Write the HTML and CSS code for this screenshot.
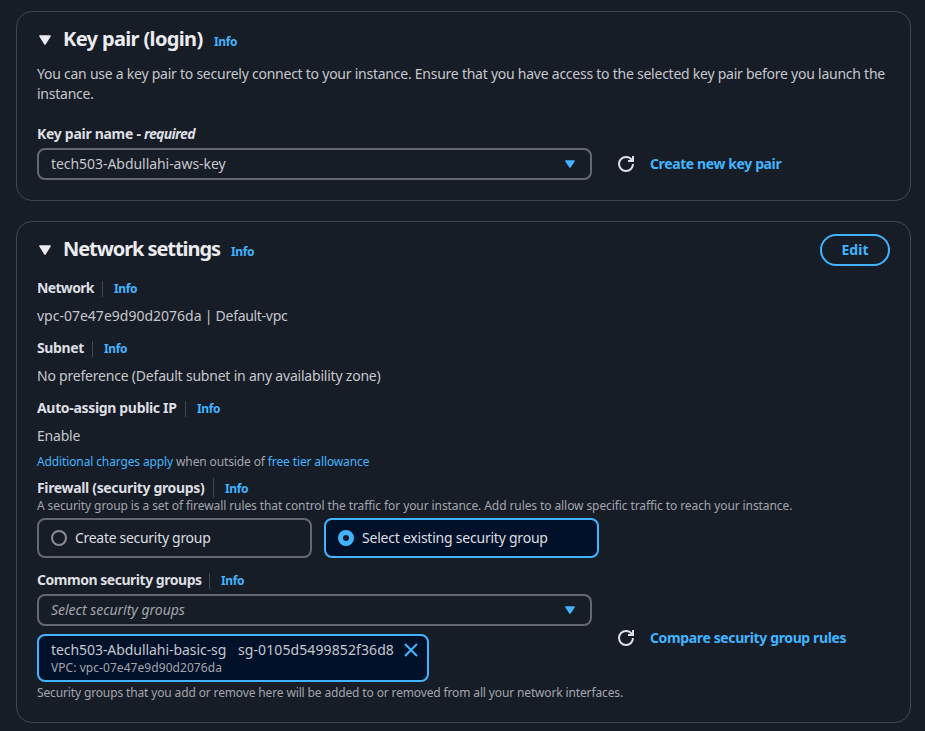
FILE: index.html
```
<!DOCTYPE html>
<html lang="en">
<head>
<meta charset="utf-8">
<title>Launch an instance</title>
<link rel="stylesheet" href="styles.css">
</head>
<body>
<main class="page">
  <section class="card">
    <header class="card-header">
      <svg class="caret" width="16" height="16" viewBox="0 0 16 16"><path d="M3 4h10l-5 8z" fill="#ebebf0" stroke="#ebebf0" stroke-width="1.6" stroke-linejoin="round"/></svg>
      <h2 class="title title-key">Key pair (login)</h2>
      <a class="info">Info</a>
    </header>
    <p class="body-text intro">You can use a key pair to securely connect to your instance. Ensure that you have access to the selected key pair before you launch the instance.</p>
    <div class="label label-key"><span class="key-name">Key pair name - </span><i>required</i></div>
    <div class="field-row">
      <div class="select"><span class="id-text">tech503-Abdullahi-aws-key</span>
        <svg class="arrow" width="16" height="16" viewBox="0 0 16 16"><path d="M4 5h8l-4 6z" fill="#42b4ff" stroke="#42b4ff" stroke-width="1.6" stroke-linejoin="round"/></svg>
      </div>
      <svg class="refresh" width="16" height="16" viewBox="0 0 16 16"><path d="M10 5h5V0M15 8a6.96 6.96 0 0 1-7 7 6.96 6.96 0 0 1-7-7 6.96 6.96 0 0 1 7-7c2.8 0 5.2 1.6 6.300 4" fill="none" stroke="#dedee3" stroke-width="2"/></svg>
      <a class="action action-create">Create new key pair</a>
    </div>
  </section>

  <section class="card">
    <header class="card-header">
      <svg class="caret" width="16" height="16" viewBox="0 0 16 16"><path d="M3 4h10l-5 8z" fill="#ebebf0" stroke="#ebebf0" stroke-width="1.6" stroke-linejoin="round"/></svg>
      <h2 class="title title-network">Network settings</h2>
      <a class="info">Info</a>
      <button class="edit">Edit</button>
    </header>
    <div class="group">
      <div class="label"><span class="l-network">Network</span><a class="info divided">Info</a></div>
      <div class="body-text value v-vpc"><span class="vpc-id">vpc-07e47e9d90d2076da</span> | Default-vpc</div>
    </div>
    <div class="group">
      <div class="label"><span class="l-subnet">Subnet</span><a class="info divided">Info</a></div>
      <div class="body-text value v-pref">No preference (Default subnet in any availability zone)</div>
    </div>
    <div class="group">
      <div class="label"><span class="l-ip">Auto-assign public IP</span><a class="info divided">Info</a></div>
      <div class="body-text value v-enable">Enable</div>
    </div>
    <div class="small charges"><a>Additional charges apply</a> when outside of <a>free tier allowance</a></div>
    <div class="label"><span class="l-firewall">Firewall (security groups)</span><a class="info divided tall">Info</a></div>
    <div class="small firewall-note">A security group is a set of firewall rules that control the traffic for your instance. Add rules to allow specific traffic to reach your instance.</div>
    <div class="tiles">
      <div class="tile"><span class="radio"></span><span class="t-create">Create security group</span></div>
      <div class="tile selected"><span class="radio"></span><span class="t-select">Select existing security group</span></div>
    </div>
    <div class="label label-common"><span class="l-common">Common security groups</span><a class="info divided">Info</a></div>
    <div class="field-row">
      <div class="stack">
        <div class="select"><i class="placeholder">Select security groups</i>
          <svg class="arrow" width="16" height="16" viewBox="0 0 16 16"><path d="M4 5h8l-4 6z" fill="#42b4ff" stroke="#42b4ff" stroke-width="1.6" stroke-linejoin="round"/></svg>
        </div>
        <div class="token">
          <div class="token-main"><span class="sg-name">tech503-Abdullahi-basic-sg</span><span class="sg-id">sg-0105d5499852f36d8</span>
            <svg class="close" width="16" height="16" viewBox="0 0 16 16"><path d="m2 2 12 12M14 2 2 14" fill="none" stroke="#42b4ff" stroke-width="2"/></svg>
          </div>
          <div class="small token-vpc">VPC: vpc-07e47e9d90d2076da</div>
        </div>
      </div>
      <svg class="refresh" width="16" height="16" viewBox="0 0 16 16"><path d="M10 5h5V0M15 8a6.96 6.96 0 0 1-7 7 6.96 6.96 0 0 1-7-7 6.96 6.96 0 0 1 7-7c2.8 0 5.2 1.6 6.300 4" fill="none" stroke="#dedee3" stroke-width="2"/></svg>
      <a class="action action-compare">Compare security group rules</a>
    </div>
    <div class="small help">Security groups that you add or remove here will be added to or removed from all your network interfaces.</div>
  </section>
</main>
</body>
</html>
```
FILE: styles.css
```
* { box-sizing: border-box; }
body {
  margin: 0;
  background: #161d26;
  color: #c6c6cd;
  font: 14px/20px "Noto Sans", sans-serif;
}
.page { display: flex; flex-direction: column; gap: 20px; padding: 11px 14px 8px 16px; }
.card { border: 1px solid #424650; border-radius: 16px; padding: 0 20px; white-space: nowrap; }
.card:first-child { height: 190px; }
.card:last-child { height: 502px; }
.card-header { display: flex; align-items: baseline; height: 52px; padding-top: 15px; position: relative; }
.caret { width: 16px; height: 16px; margin-right: 10px; align-self: flex-start; margin-top: 5px; }
.title { margin: 0; font-size: 20px; line-height: 24px; font-weight: 700; color: #ebebf0; }
.title-key { letter-spacing: -.64px; width: 151px; }
.title-network { letter-spacing: -1.07px; width: 168px; }
.info { font-size: 12px; line-height: 16px; font-weight: 700; letter-spacing: -.36px; color: #42b4ff; }
.edit {
  position: absolute; right: 0; top: 12px;
  width: 70px; height: 32px; padding: 0;
  border: 2px solid #42b4ff; border-radius: 16px; background: none;
  font: 700 14px/20px "Noto Sans", sans-serif; color: #42b4ff;
}
a { color: #42b4ff; }
.body-text { margin: 0; }
.intro { white-space: normal; letter-spacing: -.245px; }
.label { display: flex; align-items: baseline; height: 20px; font-weight: 700; color: #dedee3; }
.label-key { margin: 20px 0 4px; white-space: pre; }
.label-key i { letter-spacing: -.66px; }
.key-name { letter-spacing: -.29px; }
.divided { position: relative; margin-left: 20px; }
.divided::before { content: ""; position: absolute; left: -12px; top: 0; width: 1px; height: 16px; background: #424650; }
.tall::before { top: -3px; height: 20px; }
.field-row { display: flex; align-items: center; }
.select {
  width: 555px; height: 32px; padding: 0 12px;
  display: flex; align-items: center; justify-content: space-between;
  border: 2px solid #656871; border-radius: 8px;
}
.id-text { letter-spacing: -.05px; }
.arrow { width: 16px; height: 16px; }
.refresh { margin: 0 16px 0 26px; }
.action { font-weight: 700; }
.action-create { letter-spacing: -.39px; }
.action-compare { letter-spacing: -.37px; }
.group { height: 60px; }
.group:first-of-type { margin-top: 4px; }
.value { margin-top: 8px; }
.l-network { letter-spacing: -.66px; width: 57px; }
.l-subnet { letter-spacing: -.38px; width: 47px; }
.l-ip { letter-spacing: -.33px; width: 140px; }
.l-firewall { letter-spacing: -.34px; width: 168px; }
.l-common { letter-spacing: -.47px; width: 164px; }
.v-vpc { letter-spacing: -.3px; }
.vpc-id { letter-spacing: 0; }
.v-pref { letter-spacing: -.21px; }
.v-enable { letter-spacing: -.22px; }
.small { font-size: 12px; line-height: 16px; color: #a4a4ad; letter-spacing: -.125px; }
.charges { margin-top: -4px; height: 24px; }
.firewall-note { letter-spacing: -.09px; height: 20px; }
.tiles { display: flex; gap: 12px; }
.tile {
  width: 275px; height: 40px; padding: 0 12px;
  display: flex; align-items: center; gap: 8px;
  border: 2px solid #656871; border-radius: 8px; color: #dedee3;
}
.selected { border-color: #42b4ff; background: #001129; }
.radio { width: 16px; height: 16px; border: 2px solid #8c8c94; border-radius: 50%; }
.selected .radio { border: 5px solid #42b4ff; background: #161d26; }
.t-create { letter-spacing: -.3px; }
.t-select { letter-spacing: -.225px; }
.label-common { margin: 12px 0 4px; }
.stack { display: flex; flex-direction: column; gap: 8px; }
.placeholder { color: #a4a4ad; letter-spacing: -.02px; }
.token { width: 392px; height: 48px; padding: 4px 12px; border: 2px solid #42b4ff; border-radius: 8px; background: #001129; }
.token-main { display: flex; align-items: center; height: 20px; }
.sg-name { flex: none; letter-spacing: -.06px; width: 187px; }
.sg-id { flex: none; letter-spacing: .1px; width: 165px; }
.close { flex: none; }
.token-vpc { letter-spacing: .06px; }
.help { letter-spacing: -.138px; margin-top: 3px; }
```
